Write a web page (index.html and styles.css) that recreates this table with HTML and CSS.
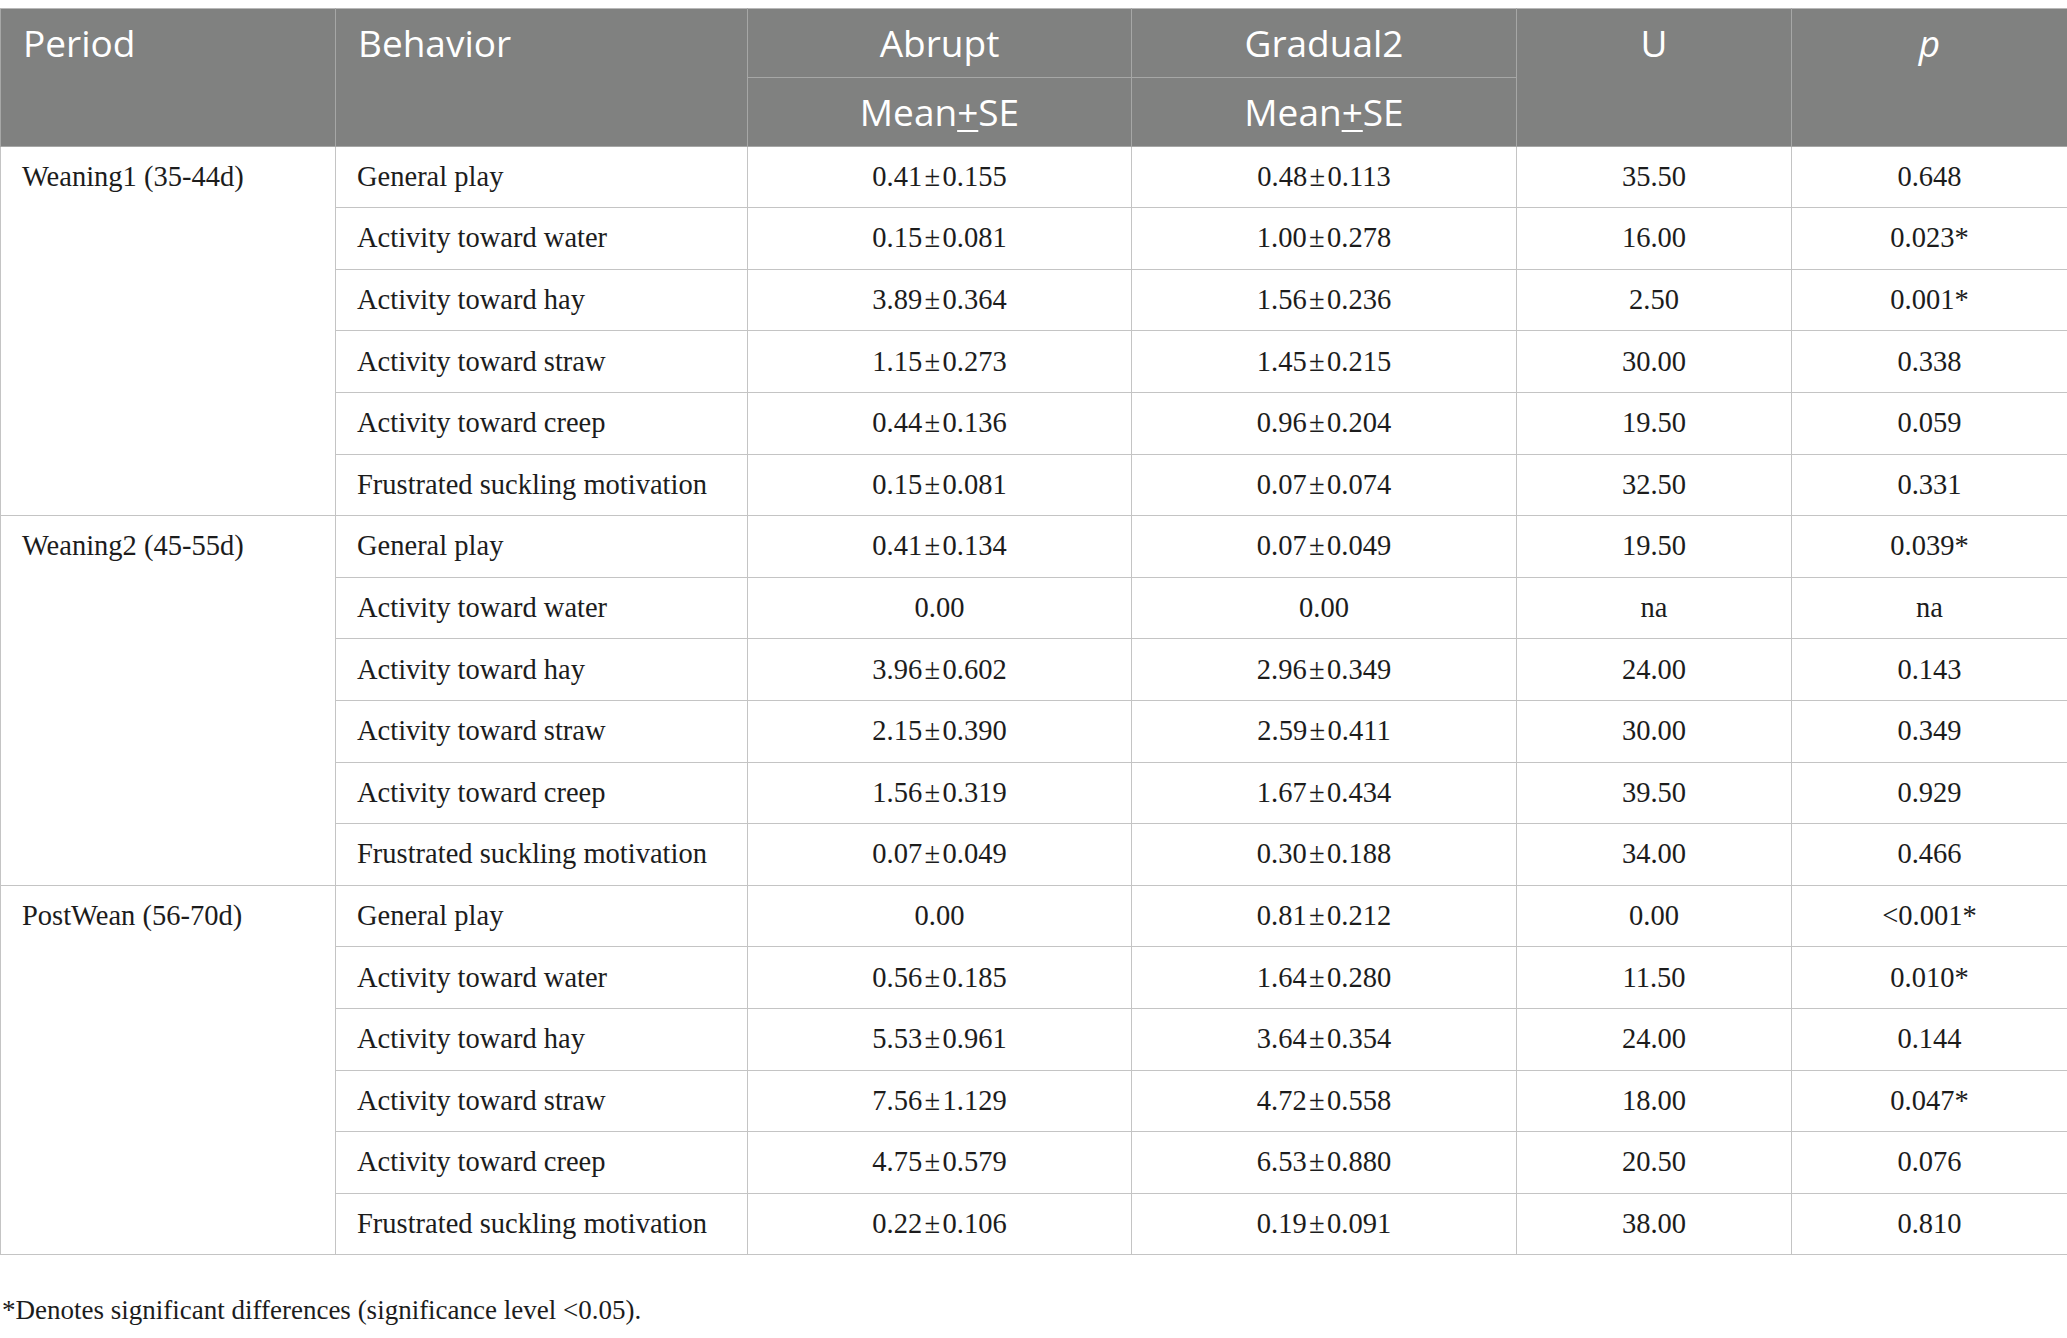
FILE: index.html
```html
<!DOCTYPE html>
<html>
<head>
<meta charset="utf-8">
<link rel="stylesheet" href="styles.css">
</head>
<body>
<div class="wrap">
<table class="data">
<colgroup>
<col class="c1"><col class="c2"><col class="c3"><col class="c4"><col class="c5"><col class="c6">
</colgroup>
<thead>
<tr class="h1">
<th rowspan="2" class="hl top">Period</th>
<th rowspan="2" class="hl top">Behavior</th>
<th class="hc">Abrupt</th>
<th class="hc">Gradual2</th>
<th rowspan="2" class="hc top">U</th>
<th rowspan="2" class="hc top"><i>p</i></th>
</tr>
<tr class="h2">
<th class="hc">Mean<u>+</u>SE</th>
<th class="hc">Mean<u>+</u>SE</th>
</tr>
</thead>
<tbody>
<tr><td rowspan="6" class="per">Weaning1 (35-44d)</td><td class="beh">General play</td><td>0.41&#8202;±&#8202;0.155</td><td>0.48&#8202;±&#8202;0.113</td><td>35.50</td><td>0.648</td></tr>
<tr><td class="beh">Activity toward water</td><td>0.15&#8202;±&#8202;0.081</td><td>1.00&#8202;±&#8202;0.278</td><td>16.00</td><td>0.023*</td></tr>
<tr><td class="beh">Activity toward hay</td><td>3.89&#8202;±&#8202;0.364</td><td>1.56&#8202;±&#8202;0.236</td><td>2.50</td><td>0.001*</td></tr>
<tr><td class="beh">Activity toward straw</td><td>1.15&#8202;±&#8202;0.273</td><td>1.45&#8202;±&#8202;0.215</td><td>30.00</td><td>0.338</td></tr>
<tr><td class="beh">Activity toward creep</td><td>0.44&#8202;±&#8202;0.136</td><td>0.96&#8202;±&#8202;0.204</td><td>19.50</td><td>0.059</td></tr>
<tr><td class="beh">Frustrated suckling motivation</td><td>0.15&#8202;±&#8202;0.081</td><td>0.07&#8202;±&#8202;0.074</td><td>32.50</td><td>0.331</td></tr>
<tr><td rowspan="6" class="per">Weaning2 (45-55d)</td><td class="beh">General play</td><td>0.41&#8202;±&#8202;0.134</td><td>0.07&#8202;±&#8202;0.049</td><td>19.50</td><td>0.039*</td></tr>
<tr><td class="beh">Activity toward water</td><td>0.00</td><td>0.00</td><td>na</td><td>na</td></tr>
<tr><td class="beh">Activity toward hay</td><td>3.96&#8202;±&#8202;0.602</td><td>2.96&#8202;±&#8202;0.349</td><td>24.00</td><td>0.143</td></tr>
<tr><td class="beh">Activity toward straw</td><td>2.15&#8202;±&#8202;0.390</td><td>2.59&#8202;±&#8202;0.411</td><td>30.00</td><td>0.349</td></tr>
<tr><td class="beh">Activity toward creep</td><td>1.56&#8202;±&#8202;0.319</td><td>1.67&#8202;±&#8202;0.434</td><td>39.50</td><td>0.929</td></tr>
<tr><td class="beh">Frustrated suckling motivation</td><td>0.07&#8202;±&#8202;0.049</td><td>0.30&#8202;±&#8202;0.188</td><td>34.00</td><td>0.466</td></tr>
<tr><td rowspan="6" class="per">PostWean (56-70d)</td><td class="beh">General play</td><td>0.00</td><td>0.81&#8202;±&#8202;0.212</td><td>0.00</td><td>&lt;0.001*</td></tr>
<tr><td class="beh">Activity toward water</td><td>0.56&#8202;±&#8202;0.185</td><td>1.64&#8202;±&#8202;0.280</td><td>11.50</td><td>0.010*</td></tr>
<tr><td class="beh">Activity toward hay</td><td>5.53&#8202;±&#8202;0.961</td><td>3.64&#8202;±&#8202;0.354</td><td>24.00</td><td>0.144</td></tr>
<tr><td class="beh">Activity toward straw</td><td>7.56&#8202;±&#8202;1.129</td><td>4.72&#8202;±&#8202;0.558</td><td>18.00</td><td>0.047*</td></tr>
<tr><td class="beh">Activity toward creep</td><td>4.75&#8202;±&#8202;0.579</td><td>6.53&#8202;±&#8202;0.880</td><td>20.50</td><td>0.076</td></tr>
<tr><td class="beh">Frustrated suckling motivation</td><td>0.22&#8202;±&#8202;0.106</td><td>0.19&#8202;±&#8202;0.091</td><td>38.00</td><td>0.810</td></tr>
</tbody>
</table>
<p class="note">*Denotes significant differences (significance level &lt;0.05).</p>
</div>
</body>
</html>
```

FILE: styles.css
```css
html, body {
  margin: 0;
  padding: 0;
  background: #ffffff;
}
.wrap {
  padding-top: 8px;
}
.data {
  width: 2067px;
  table-layout: fixed;
  border-collapse: collapse;
  font-family: "Liberation Serif", "Times New Roman", serif;
  font-size: 28.5px;
  color: #1c1c1c;
}
.c1 { width: 335px; }
.c2 { width: 412px; }
.c3 { width: 384px; }
.c4 { width: 385px; }
.c5 { width: 275px; }
.c6 { width: 276px; }

.data th {
  background: #808180;
  color: #ffffff;
  font-family: "Open Sans", "Noto Sans", sans-serif;
  font-weight: normal;
  font-size: 37px;
  line-height: 50px;
  border: 1px solid #a6a7a6;
  padding: 0 22px;
  height: 68.8px;
  box-sizing: border-box;
}
.data thead tr.h1 th { border-top: 1px solid #b8b8b8; }
.data th.hl { text-align: left; }
.data th.hc { text-align: center; vertical-align: middle; }
.data th.top { vertical-align: top; padding-top: 9px; }
.data th i { font-style: italic; }
.data th u { text-decoration-thickness: 2px; text-underline-offset: 4px; }

.data td {
  border: 1px solid #c4c4c4;
  text-align: center;
  vertical-align: middle;
  line-height: 34px;
  padding: 13.3px 10px;
  white-space: nowrap;
}
.data td.beh {
  text-align: left;
  padding-left: 21px;
}
.data td.per {
  text-align: left;
  vertical-align: top;
  padding-left: 21px;
}
.note {
  margin: 39px 0 0 2px;
  font-family: "Liberation Serif", "Times New Roman", serif;
  font-size: 27px;
  line-height: 32px;
  color: #1c1c1c;
}
```
